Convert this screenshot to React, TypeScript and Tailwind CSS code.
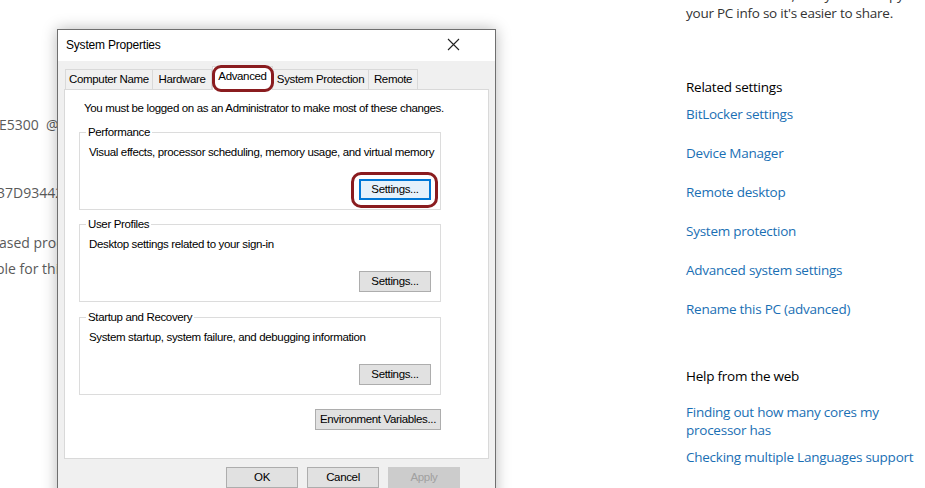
const dlgFont = { fontFamily: '"Liberation Sans", Arial, sans-serif' };

const WinButton = ({ label, focused, disabled, width = 'w-[72px]' }: { label: string; focused?: boolean; disabled?: boolean; width?: string }) => {
  return (
    <div
      className={
        'h-[21px] flex items-center justify-center text-[11.5px] tracking-[-0.35px] ' +
        width +
        (focused
          ? ' border-2 border-[#0078d7] bg-[#e5f1fb] text-black'
          : disabled
          ? ' border border-[#cccccc] bg-[#cccccc] text-[#a0a0a0]'
          : ' border border-[#adadad] bg-[#e1e1e1] text-black')
      }
    >
      {label}
    </div>
  );
};

const GroupBox = ({ title, text, focused }: { title: string; text: string; focused?: boolean }) => {
  return (
    <div className="relative ml-[14px] mr-[47px] h-[78px] border border-[#dcdcdc] pt-[12px] pl-[9px] pr-[9px]">
      <span className="absolute -top-[8px] left-[6px] bg-white px-[2px] text-[11.5px] tracking-[-0.35px] leading-[14px]">{title}</span>
      <div className="text-[11.5px] tracking-[-0.35px] leading-[14px] whitespace-nowrap">{text}</div>
      <div className="flex justify-end mt-[20px]">
        <WinButton label="Settings..." focused={focused} />
      </div>
    </div>
  );
};

const Dialog = () => {
  const tabs = [
    { name: 'Computer Name', w: 'w-[88px]' },
    { name: 'Hardware', w: 'w-[59px]' },
    { name: 'Advanced', w: 'w-[61px]', active: true },
    { name: 'System Protection', w: 'w-[96px]' },
    { name: 'Remote', w: 'w-[49px]' },
  ];
  return (
    <div
      className="absolute left-[57px] top-[29px] w-[439px] h-[480px] border border-[#6f6f6f] bg-[#f0f0f0] shadow-[0_0_14px_rgba(0,0,0,0.28)] text-black"
      style={dlgFont}
    >
      {/* title bar */}
      <div className="h-[31px] bg-white flex items-center justify-between pl-[8px] pr-[35px]">
        <span className="text-[12px] tracking-[-0.2px] -mt-[2px]">System Properties</span>
        <svg width="13" height="13" viewBox="0 0 13 13" className="-mt-[3px]">
          <path d="M1 1 L12 12 M12 1 L1 12" stroke="#222" strokeWidth="1.1" fill="none" />
        </svg>
      </div>

      {/* tabs */}
      <div className="flex items-end h-[28px] pl-[7px]">
        {tabs.map((t) => (
          <div
            key={t.name}
            className={
              'relative flex items-center justify-center text-[11.5px] tracking-[-0.35px] border-[#d9d9d9] ' +
              t.w +
              (t.active
                ? ' h-[24px] bg-white border-x border-t -mb-px z-10 pb-[4px]'
                : ' h-[20px] bg-[#f0f0f0] border-t border-r first:border-l')
            }
          >
            {t.name}
            {t.active && (
              <div className="absolute -left-[1px] -top-[2px] w-[62px] h-[27px] rounded-[9px] border-[3px] border-[#8a1c1f]" />
            )}
          </div>
        ))}
      </div>

      {/* tab panel */}
      <div className="ml-[6px] mr-[6px] h-[370px] bg-white border border-[#d9d9d9] flex flex-col">
        <div className="mt-[11px] ml-[19px] text-[11.5px] tracking-[-0.35px] leading-[14px]">
          You must be logged on as an Administrator to make most of these changes.
        </div>
        <div className="mt-[17px] relative">
          <GroupBox title="Performance" text="Visual effects, processor scheduling, memory usage, and virtual memory" focused />
          <div className="absolute left-[286px] top-[40px] w-[87px] h-[36px] rounded-[10px] border-[3px] border-[#8a1c1f]" />
        </div>
        <div className="mt-[14px]">
          <GroupBox title="User Profiles" text="Desktop settings related to your sign-in" />
        </div>
        <div className="mt-[15px]">
          <GroupBox title="Startup and Recovery" text="System startup, system failure, and debugging information" />
        </div>
        <div className="flex justify-end mr-[47px] mt-[14px]">
          <WinButton label="Environment Variables..." width="w-[126px]" />
        </div>
      </div>

      {/* bottom buttons */}
      <div className="flex gap-[9px] mt-[8px] ml-[168px]">
        <WinButton label="OK" />
        <WinButton label="Cancel" />
        <WinButton label="Apply" disabled />
      </div>
    </div>
  );
};

const RelatedLink = ({ children }: { children: React.ReactNode }) => (
  <div className="text-[#1a6fb4] leading-[18px]">{children}</div>
);

const App = () => {
  return (
    <div className="relative w-[925px] h-[488px] bg-white overflow-hidden">
      {/* page text behind the dialog */}
      <div
        className="absolute left-0 top-0 w-[200px] text-[14px] text-[#5a5a5a]"
        style={{ fontFamily: '"Open Sans", "Liberation Sans", sans-serif' }}
      >
        <div className="absolute top-[114px] -left-[1px] whitespace-nowrap">E5300&nbsp;&nbsp;@ 2.60GHz</div>
        <div className="absolute top-[182px] -left-[3px] whitespace-nowrap">37D93442-8B51</div>
        <div className="absolute top-[232px] -left-[1px] whitespace-nowrap">ased processor</div>
        <div className="absolute top-[258px] -left-[4px] whitespace-nowrap">ble for this display</div>
      </div>

      {/* right column */}
      <div
        className="absolute left-[686px] top-[-14px] w-[239px] text-[13.5px] tracking-[-0.25px] flex flex-col"
        style={{ fontFamily: '"Open Sans", "Liberation Sans", sans-serif' }}
      >
        <div className="text-[#333] leading-[18px]">have moved here, and you can copy</div>
        <div className="text-[#333] leading-[18px]">your PC info so it's easier to share.</div>
        <div className="mt-[56px] text-black leading-[18px]">Related settings</div>
        <div className="mt-[9px] flex flex-col gap-[21px]">
          <RelatedLink>BitLocker settings</RelatedLink>
          <RelatedLink>Device Manager</RelatedLink>
          <RelatedLink>Remote desktop</RelatedLink>
          <RelatedLink>System protection</RelatedLink>
          <RelatedLink>Advanced system settings</RelatedLink>
          <RelatedLink>Rename this PC (advanced)</RelatedLink>
        </div>
        <div className="mt-[49px] text-black leading-[18px]">Help from the web</div>
        <div className="mt-[18px] flex flex-col gap-[9px]">
          <RelatedLink>
            Finding out how many cores my
            <br />
            processor has
          </RelatedLink>
          <RelatedLink>
            <span className="whitespace-nowrap">Checking multiple Languages support</span>
          </RelatedLink>
        </div>
      </div>

      <Dialog />
    </div>
  );
};

export default App;
